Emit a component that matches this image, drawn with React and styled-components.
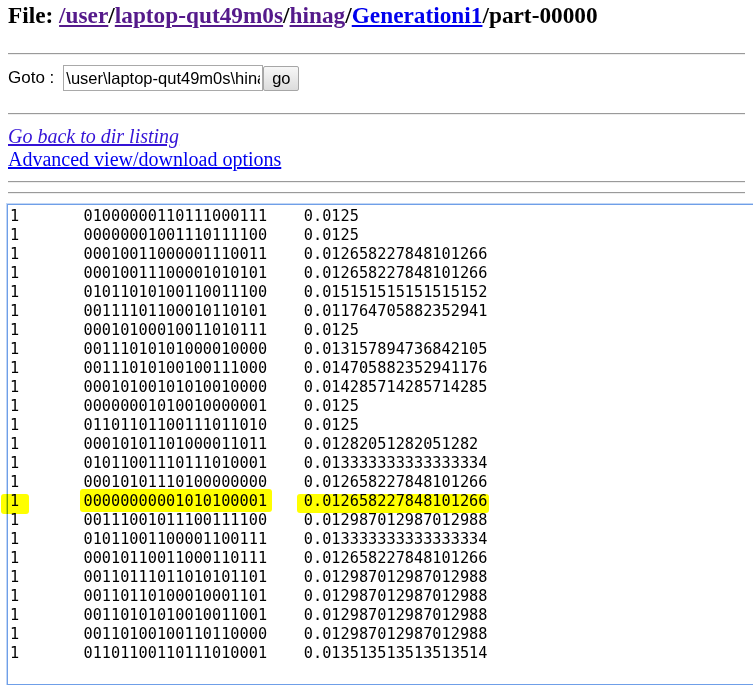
import React from "react";
import styled, { createGlobalStyle } from "styled-components";

const GlobalStyle = createGlobalStyle`
  html, body { margin: 0; padding: 0; background: #ffffff; overflow: hidden; }
  body { font-family: "Liberation Serif", "Times New Roman", serif; color: #000; }
`;

const Page = styled.div`
  padding: 0 8px;
  display: flex;
  flex-direction: column;
  align-items: stretch;
  overflow: hidden;
`;

const Title = styled.h3`
  margin: 0;
  padding-top: 2px;
  font-size: 23.3px;
  line-height: 27px;
  font-weight: bold;
  white-space: nowrap;
`;

const PathLink = styled.a`
  color: ${(p) => (p.$visited ? "#551a8b" : "#0000ee")};
  text-decoration: underline;
`;

const Rule = styled.hr`
  margin: ${(p) => p.$top}px 0 0 0;
  height: 0;
  border: 0;
  border-top: 1px solid #9a9a9a;
  border-bottom: 1px solid #eeeeee;
`;

const GotoForm = styled.form`
  margin-top: 10px;
  display: flex;
  align-items: center;
  height: 26px;
  font-family: "Liberation Sans", Arial, sans-serif;
  font-size: 17px;
`;

const GotoLabel = styled.span`
  margin-right: 9px;
  white-space: pre;
`;

const PathInput = styled.input`
  box-sizing: border-box;
  width: 200px;
  height: 26px;
  margin: 0;
  padding: 1px 2px;
  border: 1px solid #a9a9a9;
  font-family: "Liberation Sans", Arial, sans-serif;
  font-size: 16.5px;
  color: #000;
  background: #fff;
  outline: none;
`;

const GoButton = styled.button`
  box-sizing: border-box;
  width: 36px;
  height: 25px;
  margin: 0;
  padding: 0;
  border: 1px solid #a6a6a6;
  border-radius: 2px;
  background: linear-gradient(#f7f7f7, #dcdcdc);
  font-family: "Liberation Sans", Arial, sans-serif;
  font-size: 16.5px;
  color: #000;
`;

const LinkList = styled.div`
  margin-top: 10px;
  display: flex;
  flex-direction: column;
  align-items: flex-start;
  font-size: 20px;
  line-height: 23px;
`;

const NavLink = styled.a`
  color: ${(p) => (p.$italic ? "#3413d6" : "#0000ee")};
  font-style: ${(p) => (p.$italic ? "italic" : "normal")};
  text-decoration: underline;
`;

const Viewer = styled.div`
  position: relative;
  margin-top: 10px;
  margin-left: -1px;
  width: 900px;
`;

const ContentArea = styled.textarea`
  display: block;
  box-sizing: border-box;
  width: 900px;
  height: 481px;
  margin: 0;
  padding: 2px;
  border: 1px solid #6f9fe8;
  box-shadow: 0 0 0 1px #c3d7f5;
  outline: none;
  resize: none;
  overflow: hidden;
  font-family: "DejaVu Sans Mono", "Liberation Mono", monospace;
  font-size: 15.25px;
  line-height: 19px;
  tab-size: 8;
  color: #000;
  background: #fff;
  white-space: pre;
`;

const Marker = styled.span`
  position: absolute;
  background: #ffff00;
  mix-blend-mode: multiply;
  border-radius: 3px;
  pointer-events: none;
`;

const rows = [
  ["01000000110111000111", "0.0125"],
  ["00000001001110111100", "0.0125"],
  ["00010011000001110011", "0.012658227848101266"],
  ["00010011100001010101", "0.012658227848101266"],
  ["01011010100110011100", "0.015151515151515152"],
  ["00111101100010110101", "0.011764705882352941"],
  ["00010100010011010111", "0.0125"],
  ["00111010101000010000", "0.013157894736842105"],
  ["00111010100100111000", "0.014705882352941176"],
  ["00010100101010010000", "0.014285714285714285"],
  ["00000001010010000001", "0.0125"],
  ["01101101100111011010", "0.0125"],
  ["00010101101000011011", "0.01282051282051282"],
  ["01011001110111010001", "0.013333333333333334"],
  ["00010101110100000000", "0.012658227848101266"],
  ["00000000001010100001", "0.012658227848101266"],
  ["00111001011100111100", "0.012987012987012988"],
  ["01011001100001100111", "0.013333333333333334"],
  ["00010110011000110111", "0.012658227848101266"],
  ["00110111011010101101", "0.012987012987012988"],
  ["00110110100010001101", "0.012987012987012988"],
  ["00110101010010011001", "0.012987012987012988"],
  ["00110100100110110000", "0.012987012987012988"],
  ["01101100110111010001", "0.013513513513513514"],
];

const fileText = rows.map(([b, v]) => `1\t${b}\t${v}`).join("\n");

const markers = [
  { left: -6, top: 290, width: 28, height: 20 },
  { left: 73, top: 285, width: 192, height: 23 },
  { left: 290, top: 290, width: 192, height: 19 },
];

export default function App() {
  return (
    <>
      <GlobalStyle />
      <Page>
        <Title>
          File: <PathLink href="#" $visited>/user</PathLink>/
          <PathLink href="#" $visited>laptop-qut49m0s</PathLink>/
          <PathLink href="#" $visited>hinag</PathLink>/
          <PathLink href="#">Generationi1</PathLink>/part-00000
        </Title>
        <Rule $top={24} />
        <GotoForm onSubmit={(e) => e.preventDefault()}>
          <GotoLabel>Goto :</GotoLabel>
          <PathInput
            type="text"
            defaultValue={"\\user\\laptop-qut49m0s\\hinag\\Generationi1"}
          />
          <GoButton type="submit">go</GoButton>
        </GotoForm>
        <Rule $top={22} />
        <LinkList>
          <NavLink href="#" $italic>Go back to dir listing</NavLink>
          <NavLink href="#">Advanced view/download options</NavLink>
        </LinkList>
        <Rule $top={10} />
        <Rule $top={9} />
        <Viewer>
          <ContentArea readOnly value={fileText} wrap="off" spellCheck={false} />
          {markers.map((m, i) => (
            <Marker
              key={i}
              style={{ left: m.left, top: m.top, width: m.width, height: m.height }}
            />
          ))}
        </Viewer>
      </Page>
    </>
  );
}
